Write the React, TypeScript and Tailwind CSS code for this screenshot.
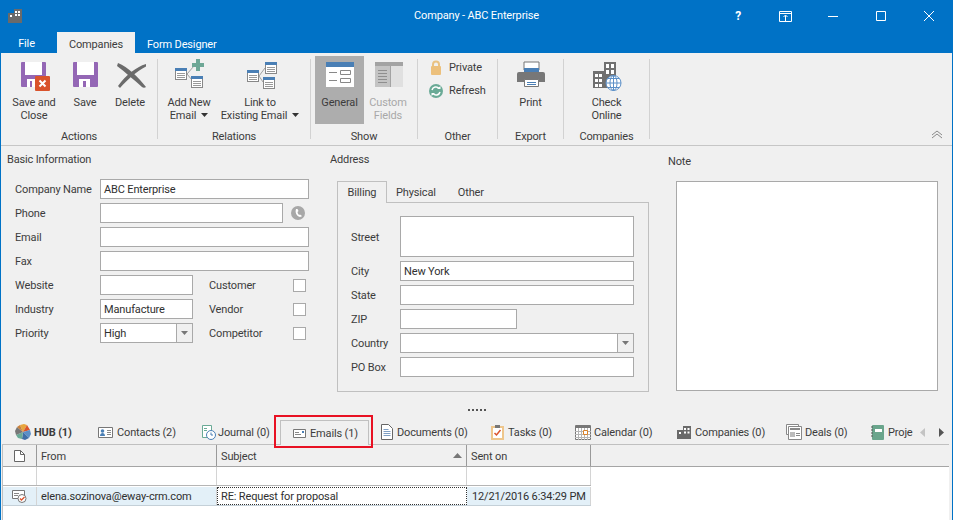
import React from "react";

const font = "font-['Roboto','Noto_Sans',sans-serif]";

function Big({ w, icon, lines, active, dim }: { w: string; icon: React.ReactNode; lines: React.ReactNode[]; active?: boolean; dim?: boolean }) {
  return (
    <div className={`${w} flex h-[68px] flex-col items-center pt-[3px] ${active ? "bg-[#adadad]" : ""} ${dim ? "text-[#a8a8a8]" : ""}`}>
      <div className="h-[32px] w-[32px]">{icon}</div>
      <div className="mt-[5px] text-center leading-[13px] whitespace-nowrap">
        {lines.map((l, i) => (
          <div key={i}>{l}</div>
        ))}
      </div>
    </div>
  );
}

function Group({ w, label, children }: { w: string; label: string; children: React.ReactNode }) {
  return (
    <div className={`${w} flex shrink-0 flex-col`}>
      <div className="mt-[3px] flex h-[68px]">{children}</div>
      <div className="mt-[6px] text-center leading-[14px]">{label}</div>
    </div>
  );
}

const Sep = () => <div className="my-[6px] w-px shrink-0 bg-[#d2d2d2]" />;

const Caret = () => (
  <svg viewBox="0 0 7 4" className="ml-[5px] inline-block h-[4px] w-[7px] align-[2px]">
    <path d="M0 0h7L3.5 4z" fill="#333" />
  </svg>
);

function Card({ x, y, head = "#4a7fb5" }: { x: number; y: number; head?: string }) {
  return (
    <g>
      <rect x={x + 0.5} y={y + 0.5} width="11" height="11" fill="#fff" stroke="#888" />
      <rect x={x} y={y} width="12" height="3" fill={head} />
      <path d={`M${x + 2} ${y + 5.5}h8M${x + 2} ${y + 7.5}h8M${x + 2} ${y + 9.5}h8`} stroke="#999" />
    </g>
  );
}

function Field({ w, h = "h-[20px]", value, combo }: { w: string; h?: string; value?: string; combo?: boolean }) {
  return (
    <div className={`${w} ${h} flex shrink-0 items-center border border-[#a9a9a9] bg-white`}>
      <div className="flex-1 truncate pt-[2px] pl-[3px] leading-[16px] text-[#2f2f2f]">{value}</div>
      {combo && (
        <div className="flex h-full w-[16px] items-center justify-center border-l border-[#a9a9a9] bg-[#f0f0f0]">
          <svg viewBox="0 0 7 4" className="h-[4px] w-[7px]">
            <path d="M0 0h7L3.5 4z" fill="#777" />
          </svg>
        </div>
      )}
    </div>
  );
}

function Row({ label, w, children }: { label: string; w: string; children: React.ReactNode }) {
  return (
    <div className="mb-[4px] flex items-center">
      <div className={`${w} shrink-0 pt-[2px] leading-[14px] whitespace-nowrap`}>{label}</div>
      {children}
    </div>
  );
}

const Check = () => <div className="h-[13px] w-[13px] shrink-0 border border-[#a9a9a9] bg-white" />;

function Tab({ w, icon, children, gap = "gap-[3px]" }: { w: string; icon: React.ReactNode; children: React.ReactNode; gap?: string }) {
  return (
    <div className={`${w} flex h-[24px] shrink-0 items-center whitespace-nowrap ${gap}`}>
      {icon}
      <span className="pt-[2px]">{children}</span>
    </div>
  );
}

export default function App() {
  return (
    <div className={`${font} flex h-[520px] w-[953px] flex-col overflow-hidden border-x border-[#0072c6] bg-[#f0f0f0] text-[11px] tracking-[-0.15px] text-[#3c3c3c]`}>
      {/* title bar */}
      <div className="-mx-px h-[53px] shrink-0 bg-[#0072c6] text-white">
        <div className="grid h-[32px] grid-cols-[1fr_auto_1fr] items-center">
          <div className="pl-[8px]">
            <svg viewBox="8 9 14 14" className="h-[14px] w-[14px]">
              <path d="M8 13h6V9h8v14H8z" fill="#6a6a6a" />
              <path d="M15 11h2v2h-2zM18 11h2v2h-2zM15 14h2v2h-2zM18 14h2v2h-2zM10 15h2v2h-2z" fill="#fff" />
            </svg>
          </div>
          <div className="leading-[16px]">Company - ABC Enterprise</div>
          <div className="flex items-center justify-end">
            <span className="mr-[38px] text-[12px] font-bold">?</span>
            <svg viewBox="0 0 13 11" className="mr-[36px] h-[11px] w-[13px]" fill="none" stroke="#fff">
              <path d="M.5.5h12v10H.5zM.5 2.500h12M6.500 10V4.500M4.500 6l2-2 2 2" />
            </svg>
            <svg viewBox="0 0 10 10" className="mr-[38px] h-[10px] w-[10px]" stroke="#fff">
              <path d="M0 5.500h10" />
            </svg>
            <svg viewBox="0 0 10 10" className="mr-[38px] h-[10px] w-[10px]" fill="none" stroke="#fff">
              <path d="M.5.5h9v9h-9z" />
            </svg>
            <svg viewBox="0 0 10 10" className="mr-[19px] h-[10px] w-[10px]" stroke="#fff">
              <path d="M0 0l10 10M10 0L0 10" />
            </svg>
          </div>
        </div>
        <div className="flex h-[21px] items-center">
          <div className="w-[57px] pt-[4px] pr-[4px] text-center">File</div>
          <div className="flex h-full w-[78px] items-center justify-center bg-[#f0f0f0] pt-[5px] text-[#3c3c3c]">Companies</div>
          <div className="ml-[12px] pt-[5px]">Form Designer</div>
        </div>
      </div>

      {/* ribbon */}
      <div className="flex h-[93px] shrink-0 border-b border-[#c6c6c6]">
        <Group w="w-[156px]" label="Actions">
          <div className="w-[3px]" />
          <Big
            w="w-[60px]"
            lines={["Save and", "Close"]}
            icon={
              <svg viewBox="18 59 32 32" className="h-[32px] w-[32px]">
                <rect x="21" y="62" width="25" height="25" rx="1" fill="#9467b5" />
                <path d="M25 62h17v13H25z" fill="#fff" />
                <path d="M27 79h8v8h-8z" fill="#fff" />
                <path d="M30 81h2v6h-2z" fill="#9467b5" />
                <rect x="35" y="76" width="15" height="15" rx="1" fill="#d9532c" />
                <path d="M39.500 80.500l6 6M45.500 80.500l-6 6" stroke="#fff" strokeWidth="2" />
              </svg>
            }
          />
          <Big
            w="w-[42px]"
            lines={["Save"]}
            icon={
              <svg viewBox="69 59 32 32" className="h-[32px] w-[32px]">
                <rect x="73" y="62" width="25" height="25" rx="1" fill="#9467b5" />
                <path d="M77 62h17v13H77z" fill="#fff" />
                <path d="M79 79h11v8H79z" fill="#fff" />
                <path d="M83 81h3v6h-3z" fill="#9467b5" />
              </svg>
            }
          />
          <Big
            w="w-[48px]"
            lines={["Delete"]}
            icon={
              <svg viewBox="114 59 32 32" className="h-[32px] w-[32px]" fill="#6b6b6b">
                <path d="M118 63c10 4 20 14 28 24-1 1-3 1-4 0-8-7-17-15-25-21z" />
                <path d="M146 64c-10 3-20 11-28 22l2 2c8-9 17-17 27-22z" />
              </svg>
            }
          />
        </Group>
        <Sep />
        <Group w="w-[152px]" label="Relations">
          <Big
            w="w-[62px]"
            lines={[
              "Add New",
              <>
                Email
                <Caret />
              </>,
            ]}
            icon={
              <svg viewBox="173 59 32 32" className="h-[32px] w-[32px]">
                <path d="M187 74l7-8M187 74l5 6" stroke="#a0a0a0" fill="none" />
                <Card x={175} y={68} />
                <Card x={191} y={76} />
                <path d="M196 59h4v4h4v4h-4v4h-4v-4h-4v-4h4z" fill="#6ea796" />
              </svg>
            }
          />
          <Big
            w="w-[80px]"
            lines={[
              "Link to",
              <>
                Existing Email
                <Caret />
              </>,
            ]}
            icon={
              <svg viewBox="244 59 32 32" className="h-[32px] w-[32px]" style={{ overflow: "visible" }}>
                <path d="M259 76l6-8M259 76l4 6" stroke="#a0a0a0" fill="none" />
                <Card x={247} y={70} />
                <Card x={265} y={62} />
                <Card x={263} y={77} />
              </svg>
            }
          />
        </Group>
        <Sep />
        <Group w="w-[106px]" label="Show">
          <div className="w-[4px]" />
          <Big
            w="w-[49px]"
            active
            lines={["General"]}
            icon={
              <svg viewBox="323 59 32 32" className="h-[32px] w-[32px]">
                <rect x="325" y="62" width="28" height="25" fill="#fff" />
                <rect x="325" y="62" width="28" height="5" fill="#4a7fb5" />
                <path d="M328 72.500h8M328 80.500h8" stroke="#888" />
                <path d="M339.500 70.500h10v4h-10zM339.500 78.500h10v4h-10z" fill="#fff" stroke="#888" />
              </svg>
            }
          />
          <Big
            w="w-[48px]"
            dim
            lines={["Custom", "Fields"]}
            icon={
              <svg viewBox="372 59 32 32" className="h-[32px] w-[32px]">
                <rect x="375" y="62" width="28" height="25" fill="#e0e0e0" />
                <rect x="375" y="62" width="28" height="4" fill="#a3a3a3" />
                <rect x="375" y="66" width="15" height="21" fill="#c4c4c4" />
                <rect x="390" y="66" width="1" height="21" fill="#a3a3a3" />
                <path d="M378 70.500h9M378 73.500h9M378 76.500h9M378 79.500h9M378 82.500h9" stroke="#8f8f8f" />
              </svg>
            }
          />
        </Group>
        <Sep />
        <Group w="w-[79px]" label="Other">
          <div className="pl-[11px]">
            <div className="flex h-[23px] items-center gap-[6px]">
              <svg viewBox="0 0 14 15" className="h-[15px] w-[14px]">
                <path d="M4 7V4.500a3 3 0 0 1 6 0V7" fill="none" stroke="#e9c283" strokeWidth="2" />
                <rect x="2" y="6" width="10" height="9" rx="1" fill="#ecc07c" />
              </svg>
              <span className="pt-[2px]">Private</span>
            </div>
            <div className="flex h-[23px] items-center gap-[6px]">
              <svg viewBox="0 0 14 14" className="h-[14px] w-[14px]">
                <circle cx="7" cy="7" r="7" fill="#6aaa96" />
                <path d="M3 6a4 4 0 0 1 7-1.500M11 8a4 4 0 0 1-7 1.500" fill="none" stroke="#fff" strokeWidth="1.500" />
                <path d="M8 5h3.500V2zM6 9H2.500v3z" fill="#fff" />
              </svg>
              <span className="pt-[2px]">Refresh</span>
            </div>
          </div>
        </Group>
        <Sep />
        <Group w="w-[65px]" label="Export">
          <Big
            w="w-full"
            lines={["Print"]}
            icon={
              <svg viewBox="514 59 32 32" className="h-[32px] w-[32px]">
                <path d="M523 62h15v8h-15z" fill="#fff" stroke="#777" />
                <path d="M523 68h15v4h-15z" fill="#4a7fb5" />
                <path d="M518 72h24a2 2 0 0 1 2 2v8h-28v-8a2 2 0 0 1 2-2z" fill="#777" />
                <path d="M523.500 79.500h14v7h-14z" fill="#fff" stroke="#777" />
                <path d="M526 82.500h9M526 84.500h9" stroke="#4a7fb5" />
              </svg>
            }
          />
        </Group>
        <Sep />
        <Group w="w-[85px]" label="Companies">
          <Big
            w="w-full"
            lines={["Check", "Online"]}
            icon={
              <svg viewBox="590 59 32 32" className="h-[32px] w-[32px]">
                <path d="M592 71h11v17h-11zM603 62h12v26h-12z" fill="#707070" />
                <path d="M594 74h3v3h-3zM598 74h3v3h-3zM594 79h3v3h-3zM598 79h3v3h-3zM594 84h3v3h-3zM598 84h3v3h-3zM605 64h3v4h-3zM610 64h3v4h-3zM605 70h3v4h-3zM610 70h3v4h-3z" fill="#fff" />
                <circle cx="612.500" cy="83" r="7.500" fill="#fff" stroke="#5b8fc7" />
                <path d="M605 83h15M612.500 75.500v15M607 78.500h11M607 87.500h11" stroke="#5b8fc7" fill="none" />
                <ellipse cx="612.500" cy="83" rx="3.500" ry="7.500" fill="none" stroke="#5b8fc7" />
              </svg>
            }
          />
        </Group>
        <Sep />
        <div className="flex flex-1 items-end justify-end pr-[9px] pb-[6px]">
          <svg viewBox="0 0 12 9" className="h-[9px] w-[12px]" fill="none" stroke="#8a8a8a">
            <path d="M1 5l5-4 5 4M1 8l5-4 5 4" />
          </svg>
        </div>
      </div>

      {/* form */}
      <div className="flex h-[256px] shrink-0">
        <div className="w-[329px] shrink-0 pt-[5px] pl-[6px]">
          <div className="mb-[11px] pt-px leading-[16px]">Basic Information</div>
          <div className="pl-[8px]">
            <Row label="Company Name" w="w-[85px]">
              <Field w="w-[209px]" value="ABC Enterprise" />
            </Row>
            <Row label="Phone" w="w-[85px]">
              <Field w="w-[183px]" />
              <svg viewBox="0 0 14 14" className="ml-[8px] h-[14px] w-[14px]">
                <circle cx="7" cy="7" r="7" fill="#a8a8a8" />
                <path d="M5 3c-1 3 0 7 4 8 1 0 2-1 2-1L9 8.500 8 9C7 8 6.500 7 6.500 6L7.500 5 6.500 3z" fill="#fff" />
              </svg>
            </Row>
            <Row label="Email" w="w-[85px]">
              <Field w="w-[209px]" />
            </Row>
            <Row label="Fax" w="w-[85px]">
              <Field w="w-[209px]" />
            </Row>
            <Row label="Website" w="w-[85px]">
              <Field w="w-[93px]" />
              <div className="ml-[16px] w-[84px] pt-[2px] leading-[14px]">Customer</div>
              <Check />
            </Row>
            <Row label="Industry" w="w-[85px]">
              <Field w="w-[93px]" value="Manufacture" />
              <div className="ml-[16px] w-[84px] pt-[2px] leading-[14px]">Vendor</div>
              <Check />
            </Row>
            <Row label="Priority" w="w-[85px]">
              <Field w="w-[93px]" value="High" combo />
              <div className="ml-[16px] w-[84px] pt-[2px] leading-[14px]">Competitor</div>
              <Check />
            </Row>
          </div>
        </div>

        <div className="w-[338px] shrink-0 pt-[5px]">
          <div className="mb-[13px] pt-px leading-[16px]">Address</div>
          <div className="ml-[7px] w-[312px]">
            <div className="flex h-[21px]">
              <div className="relative z-10 flex h-[22px] w-[50px] items-center justify-center border-x border-t border-[#c0c0c0] bg-[#f0f0f0] pt-[2px]">Billing</div>
              <div className="ml-[9px] flex items-center pt-[3px]">Physical</div>
              <div className="ml-[22px] flex items-center pt-[3px]">Other</div>
            </div>
            <div className="h-[190px] border border-[#c0c0c0] pt-[13px] pl-[13px]">
              <Row label="Street" w="w-[49px]">
                <Field w="w-[234px]" h="h-[41px]" />
              </Row>
              <Row label="City" w="w-[49px]">
                <Field w="w-[234px]" value="New York" />
              </Row>
              <Row label="State" w="w-[49px]">
                <Field w="w-[234px]" />
              </Row>
              <Row label="ZIP" w="w-[49px]">
                <Field w="w-[117px]" />
              </Row>
              <Row label="Country" w="w-[49px]">
                <Field w="w-[234px]" combo />
              </Row>
              <Row label="PO Box" w="w-[49px]">
                <Field w="w-[234px]" />
              </Row>
            </div>
          </div>
        </div>

        <div className="flex-1 pt-[7px]">
          <div className="mb-[11px] pt-px leading-[16px]">Note</div>
          <div className="ml-[8px] h-[210px] w-[262px] border border-[#a9a9a9] bg-white" />
        </div>
      </div>

      {/* splitter */}
      <div className="flex h-[13px] shrink-0 justify-center gap-[2px] pt-[7px]">
        {[0, 1, 2, 3, 4].map((i) => (
          <div key={i} className="h-[2px] w-[2px] bg-[#555]" />
        ))}
      </div>

      {/* bottom tabs */}
      <div className="flex h-[29px] shrink-0 pt-[5px] pl-[14px]">
        <Tab
          w="w-[83px]"
          gap="gap-[3px]"
          icon={
            <svg viewBox="0 0 16 16" className="h-[16px] w-[16px]">
              <path d="M8 8L5 1l4-1 3 1z" fill="#e8a53c" />
              <path d="M8 8l4-7 3 5z" fill="#d9532c" />
              <path d="M8 8l7-2 1 4-2 4z" fill="#5b8fc7" />
              <path d="M8 8l6 6-4 2-3-1z" fill="#3f6fa8" />
              <path d="M8 8l-1 7-4-1-2-3z" fill="#6aaa96" />
              <path d="M8 8L1 11 0 7l2-4z" fill="#777" />
              <path d="M8 8L2 3l3-2z" fill="#c9803a" />
            </svg>
          }
        >
          <b className="font-bold">HUB (1)</b>
        </Tab>
        <Tab
          w="w-[103px]"
          gap="gap-[4px]"
          icon={
            <svg viewBox="0 0 15 11" className="h-[11px] w-[15px]">
              <path d="M.5.5h14v10H.5z" fill="#fff" stroke="#777" />
              <circle cx="4.500" cy="4" r="1.800" fill="#4a7fb5" />
              <path d="M2 9c0-4 5-4 5 0z" fill="#4a7fb5" />
              <path d="M9 3.500h4M9 5.500h4M9 7.500h4" stroke="#888" />
            </svg>
          }
        >
          Contacts (2)
        </Tab>
        <Tab
          w="w-[79px]"
          gap="gap-[2px]"
          icon={
            <svg viewBox="0 0 15 15" className="h-[15px] w-[15px]">
              <path d="M1.500.5h9v12h-9z" fill="#fff" stroke="#6aaa96" />
              <path d="M3 3.500h3M3 5.500h3" stroke="#6aaa96" />
              <circle cx="10" cy="10" r="4.500" fill="#fff" stroke="#4a7fb5" />
              <path d="M10 7.500V10h2" stroke="#4a7fb5" fill="none" />
            </svg>
          }
        >
          Journal (0)
        </Tab>
        <div className="relative z-10 flex h-[25px] w-[89px] shrink-0 items-center gap-[4px] border-x border-t border-[#c0c0c0] bg-[#f0f0f0] pl-[12px]">
          <svg viewBox="0 0 13 9" className="h-[9px] w-[13px]">
            <path d="M.5.5h12v8H.5z" fill="#fff" stroke="#777" />
            <path d="M2 3.500h4M2 5.500h6" stroke="#888" />
            <path d="M9 2h2v2H9z" fill="#4a7fb5" />
          </svg>
          <span className="pt-[2px] whitespace-nowrap">Emails (1)</span>
          <div className="absolute -top-[6px] -right-[5px] -bottom-[3px] -left-[7px] border-2 border-[#e81123]" />
        </div>
        <div className="w-[12px] shrink-0" />
        <Tab
          w="w-[110px]"
          gap="gap-[4px]"
          icon={
            <svg viewBox="0 0 12 16" className="h-[16px] w-[12px]">
              <path d="M.5.5h7l4 4v11H.500z" fill="#fff" stroke="#666" />
              <path d="M2.500 5.500h5M2.500 7.500h7M2.500 9.500h7M2.500 11.500h7" stroke="#7f9fc4" />
            </svg>
          }
        >
          Documents (0)
        </Tab>
        <Tab
          w="w-[84px]"
          gap="gap-[4px]"
          icon={
            <svg viewBox="0 0 13 16" className="h-[16px] w-[13px]">
              <rect y="2" width="13" height="14" fill="#eec68c" />
              <rect x="2" y="4" width="9" height="10" fill="#fff" />
              <path d="M4 1h5v3H4z" fill="#777" />
              <path d="M3.500 9l2 2 4-5" stroke="#d9532c" strokeWidth="1.500" fill="none" />
            </svg>
          }
        >
          Tasks (0)
        </Tab>
        <Tab
          w="w-[102px]"
          gap="gap-[3px]"
          icon={
            <svg viewBox="0 0 16 15" className="h-[15px] w-[16px]">
              <path d="M.5.5h15v14H.5z" fill="#fff" stroke="#777" />
              <path d="M0 1h16v2H0z" fill="#777" />
              <path d="M3.500 3v12M6.500 3v12M9.500 3v12M12.500 3v12M0 6.500h16M0 9.500h16M0 12.500h16" stroke="#b5b5b5" />
              <path d="M8.500 5.500h4v4h-4z" fill="#fff" stroke="#d9822b" />
            </svg>
          }
        >
          Calendar (0)
        </Tab>
        <Tab
          w="w-[109px]"
          gap="gap-[4px]"
          icon={
            <svg viewBox="0 0 14 13" className="h-[13px] w-[14px]">
              <path d="M0 4h6V0h8v13H0z" fill="#6a6a6a" />
              <path d="M7 2h2v2H7zM10.500 2h2v2h-2zM7 5.500h2v2H7zM10.500 5.500h2v2h-2zM2 6h2v2H2z" fill="#fff" />
            </svg>
          }
        >
          Companies (0)
        </Tab>
        <Tab
          w="w-[85px]"
          gap="gap-[3px]"
          icon={
            <svg viewBox="0 0 16 16" className="h-[16px] w-[16px]">
              <path d="M.5.5h12v10H.5z" fill="#fff" stroke="#888" />
              <path d="M2.500 2.500h13v13h-13z" fill="#fff" stroke="#888" />
              <path d="M4 5h10" stroke="#888" strokeWidth="2" />
              <path d="M4 8h5v5H4z" fill="#bbb" />
              <path d="M10 9.500h4M10 11.500h4" stroke="#888" />
            </svg>
          }
        >
          Deals (0)
        </Tab>
        <Tab
          w="w-[43px]"
          gap="gap-[4px]"
          icon={
            <svg viewBox="0 0 13 15" className="h-[15px] w-[13px]">
              <rect x="1" width="12" height="15" rx="1" fill="#6aa58c" />
              <path d="M4 4h7v3H4z" fill="#fff" />
              <path d="M0 2h2M0 5h2M0 8h2M0 11h2" stroke="#555" />
            </svg>
          }
        >
          Proje
        </Tab>
        <div className="flex h-[24px] items-center">
          <svg viewBox="0 0 5 9" className="ml-[6px] h-[9px] w-[5px]">
            <path d="M5 0v9L0 4.500z" fill="#c4c4c4" />
          </svg>
          <svg viewBox="0 0 5 9" className="ml-[14px] h-[9px] w-[5px]">
            <path d="M0 0v9l5-4.500z" fill="#555" />
          </svg>
        </div>
      </div>

      {/* grid */}
      <div className="ml-[1px] mr-[3px] flex-1 border-t border-l border-[#c0c0c0] bg-white">
        <div className="flex h-[22px] border-b border-[#a5a5a5] bg-[#f0f0f0]">
          <div className="flex w-[34px] items-center justify-center border-r border-[#9a9a9a]">
            <svg viewBox="0 0 11 12" className="h-[12px] w-[11px]">
              <path d="M.5.500h6l4 4v7H.5z" fill="#fff" stroke="#666" />
              <path d="M6.500.5v4h4" fill="none" stroke="#666" />
            </svg>
          </div>
          <div className="flex w-[180px] items-center border-r border-[#9a9a9a] pt-[3px] pl-[4px]">From</div>
          <div className="flex w-[250px] items-center justify-between border-r border-[#9a9a9a] pr-[4px] pl-[4px]">
            <span className="pt-[3px]">Subject</span>
            <svg viewBox="0 0 9 5" className="h-[5px] w-[9px]">
              <path d="M0 5h9L4.500 0z" fill="#777" />
            </svg>
          </div>
          <div className="flex w-[124px] items-center border-r border-[#9a9a9a] pt-[3px] pl-[4px]">Sent on</div>
        </div>
        <div className="flex h-[19px] w-[588px] border-b border-[#b5b5b5]">
          <div className="w-[34px] border-r border-[#d4d4d4]" />
          <div className="w-[180px] border-r border-[#d4d4d4]" />
          <div className="w-[250px] border-r border-[#d4d4d4]" />
          <div className="w-[124px] border-r border-[#d4d4d4]" />
        </div>
        <div className="mt-px flex h-[19px] w-[588px] border-b border-[#c4d0d8] bg-[#e3f0f8] text-[#2f2f2f]">
          <div className="flex w-[34px] items-center justify-center border-r border-[#d4d4d4]">
            <svg viewBox="0 0 15 13" className="h-[13px] w-[15px]">
              <path d="M.5.500h12v8H.5z" fill="#fff" stroke="#777" />
              <path d="M2 3.500h5M2 5.500h4" stroke="#888" />
              <circle cx="10" cy="8.500" r="4" fill="#fff" stroke="#777" />
              <path d="M8 8.500l1.500 1.500 3-3" fill="none" stroke="#d9532c" strokeWidth="1.300" />
            </svg>
          </div>
          <div className="flex w-[180px] items-center border-r border-[#d4d4d4] pt-[3px] pl-[4px] whitespace-nowrap">elena.sozinova@eway-crm.com</div>
          <div className="flex w-[250px] items-center border border-dotted border-[#333] bg-white pt-[3px] pl-[3px] whitespace-nowrap">RE: Request for proposal</div>
          <div className="flex w-[124px] items-center border-r border-[#d4d4d4] pt-[3px] pl-[5px] whitespace-nowrap">12/21/2016 6:34:29 PM</div>
        </div>
      </div>
    </div>
  );
}
